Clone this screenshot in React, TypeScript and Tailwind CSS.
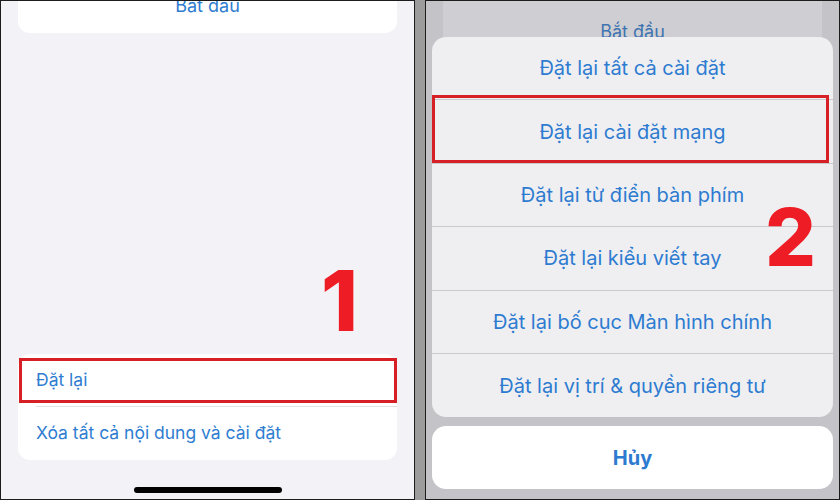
import React from 'react';

const font = { fontFamily: 'Inter, "Noto Sans", "Liberation Sans", sans-serif' };

const sheetItems = [
    'Đặt lại tất cả cài đặt',
    'Đặt lại cài đặt mạng',
    'Đặt lại từ điển bàn phím',
    'Đặt lại kiểu viết tay',
    'Đặt lại bố cục Màn hình chính',
    'Đặt lại vị trí & quyền riêng tư',
];

const LeftPanel = () => (
    <div className="relative w-[415px] h-full flex flex-col border border-[#1c1c1c] bg-[#f2f2f7] overflow-hidden">
        {/* TOP CARD (scrolled off) */}
        <div className="mx-[17px] h-[33px] -mt-px bg-white rounded-b-[12px] flex justify-center">
            <span className="text-[18px] leading-[18px] -mt-[3px] text-[#2f7dd1]">Bắt đầu</span>
        </div>

        {/* STEP NUMBER */}
        <div className="absolute left-[320px] top-[258px] text-[84px] leading-none font-extrabold text-[#ee1c24]">1</div>

        {/* RESET CARD */}
        <div className="mt-auto mx-[17px] bg-white rounded-[12px] flex flex-col">
            <div className="relative h-[52px] flex items-center pl-[18px] text-[17.5px] text-[#2f7dd1]">
                <span className="absolute left-px right-0 top-[4px] bottom-[3px] border-[3px] border-[#d71f26]" />
                Đặt lại
            </div>
            <div className="ml-[18px] h-px bg-[#e2e2e6]" />
            <div className="h-[53px] flex items-center pl-[18px] text-[17.5px] text-[#2f7dd1]">
                Xóa tất cả nội dung và cài đặt
            </div>
        </div>

        {/* HOME INDICATOR */}
        <div className="mt-[27px] mb-[6px] self-center w-[148px] h-[6px] rounded-full bg-black" />
    </div>
);

const RightPanel = () => (
    <div className="relative w-[415px] h-full flex flex-col border border-[#1c1c1c] bg-[#c3c3c8] overflow-hidden">
        {/* DIMMED CARD BEHIND */}
        <div className="mx-[17px] h-[37px] -mt-px bg-[#cfcfd3] flex flex-col overflow-hidden">
            <div className="ml-[18px] mt-[7px] h-px bg-[#b9b9be]" />
            <div className="flex justify-center pt-[16px] text-[18px] leading-[18px] text-[#3f74b0]">Bắt đầu</div>
        </div>

        {/* ACTION SHEET */}
        <div className="mx-[6px] bg-[#efeff2] rounded-[14px] flex flex-col">
            {sheetItems.map((label, i) => (
                <div
                    key={label}
                    className={`relative h-[63.4px] flex items-center justify-center text-[20px] text-[#2d7bd0] ${i < sheetItems.length - 1 ? 'border-b border-[#cacacd]' : ''}`}
                >
                    {i === 1 && (
                        <span className="absolute left-0 right-[4px] -top-[5px] bottom-0 border-[3px] border-[#d71f26]" />
                    )}
                    {label}
                </div>
            ))}
        </div>

        {/* CANCEL */}
        <div className="mx-[6px] mt-[9px] h-[63px] bg-white rounded-[14px] flex items-center justify-center text-[20px] font-bold text-[#2d7bd0]">
            Hủy
        </div>

        {/* STEP NUMBER */}
        <div className="absolute left-[339px] top-[196px] text-[80px] leading-none font-extrabold text-[#ee1c24]">2</div>
    </div>
);

export default function App() {
    return (
        <div className="w-[840px] h-[500px] flex gap-[10px] bg-[#9c9c9c]" style={font}>
            <LeftPanel />
            <RightPanel />
        </div>
    );
}
